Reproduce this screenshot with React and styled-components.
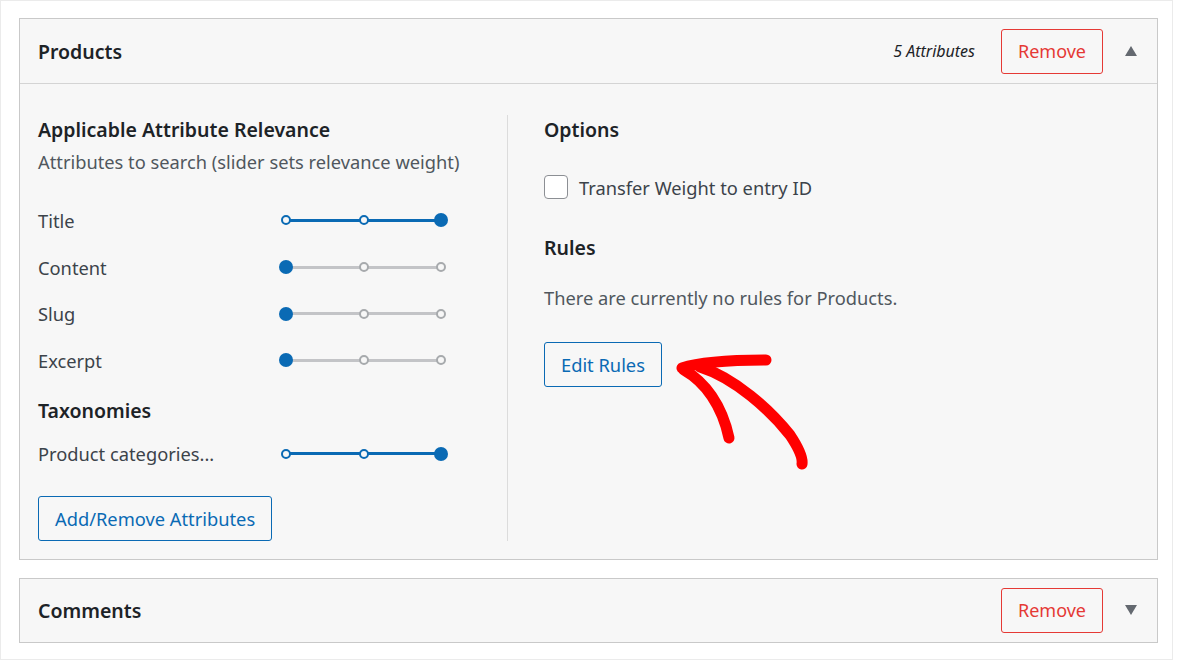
import React from "react";
import styled, { createGlobalStyle } from "styled-components";

const blue = "#0a6ab4";
const red = "#e53935";
const textDark = "#1d2327";
const textGray = "#50575e";

const GlobalStyle = createGlobalStyle`
  html, body { margin: 0; padding: 0; background: #fff; }
  body { font-family: "Noto Sans", "Open Sans", sans-serif; color: ${textDark}; }
  * { box-sizing: border-box; }
`;

const Page = styled.div`
  width: 1173px;
  height: 660px;
  border: 1px solid #ebebeb;
  padding: 17px 14px 0 18px;
  display: flex;
  flex-direction: column;
  gap: 18px;
`;

const Card = styled.section`
  border: 1px solid #c9c9c9;
  background: #f7f7f7;
`;

const Header = styled.header`
  height: ${(p) => (p.$open ? "65px" : "63px")};
  display: flex;
  align-items: center;
  padding: 0 20px 0 18px;
  border-bottom: ${(p) => (p.$open ? "1px solid #d4d4d4" : "none")};
`;

const CardTitle = styled.h2`
  margin: 0;
  flex: 1;
  font-size: 19.5px;
  font-weight: 600;
  color: ${textDark};
`;

const Count = styled.span`
  font-style: italic;
  font-size: 16px;
  color: ${textDark};
  margin-right: 26px;
`;

const RemoveButton = styled.button`
  width: 102px;
  height: 45px;
  border: 1px solid ${red};
  border-radius: 3px;
  background: transparent;
  color: ${red};
  font-family: inherit;
  font-size: 18px;
  cursor: pointer;
`;

const Toggle = styled.span`
  width: 0;
  height: 0;
  margin-left: 22px;
  border-left: 6.5px solid transparent;
  border-right: 6.5px solid transparent;
  ${(p) =>
    p.$up
      ? "border-bottom: 10px solid #646970;"
      : "border-top: 10px solid #646970;"}
`;

const Body = styled.div`
  position: relative;
  display: flex;
  padding: 31px 18px 18px 18px;
`;

const LeftCol = styled.div`
  width: 470px;
  padding-right: 20px;
  border-right: 1px solid #dcdcdc;
  display: flex;
  flex-direction: column;
`;

const RightCol = styled.div`
  flex: 1;
  padding-left: 36px;
  display: flex;
  flex-direction: column;
`;

const SectionTitle = styled.h3`
  margin: ${(p) => p.$mt || 0}px 0 0;
  font-size: 19.5px;
  line-height: 30px;
  font-weight: 600;
  color: ${textDark};
`;

const Note = styled.p`
  margin: ${(p) => p.$mt || 0}px 0 0;
  font-size: 18.3px;
  line-height: 30px;
  color: ${textGray};
`;

const AttrRow = styled.div`
  height: ${(p) => p.$h || 46.7}px;
  margin-top: ${(p) => p.$mt || 0}px;
  display: flex;
  align-items: center;
`;

const AttrLabel = styled.span`
  width: 241px;
  font-size: 18.3px;
  color: #3c434a;
`;

const Track = styled.div`
  position: relative;
  width: 169px;
  height: 14px;
  display: flex;
  align-items: center;
  justify-content: space-between;
  &::before {
    content: "";
    position: absolute;
    left: 7px;
    right: 7px;
    top: 5.5px;
    height: 3px;
    background: ${(p) => (p.$full ? blue : "#c3c4c7")};
  }
`;

const Stop = styled.span`
  position: relative;
  width: 14px;
  height: 14px;
  display: flex;
  align-items: center;
  justify-content: center;
  &::after {
    content: "";
    width: ${(p) => (p.$active ? 14 : 10)}px;
    height: ${(p) => (p.$active ? 14 : 10)}px;
    border-radius: 50%;
    box-sizing: border-box;
    background: ${(p) => (p.$active ? blue : "#f7f7f7")};
    border: ${(p) => (p.$active ? "none" : `2px solid ${p.$ring}`)};
  }
`;

const OutlineButton = styled.button`
  align-self: flex-start;
  margin-top: ${(p) => p.$mt || 0}px;
  height: 45px;
  padding: 0 16px;
  border: 1px solid ${blue};
  border-radius: 3px;
  background: transparent;
  color: ${blue};
  font-family: inherit;
  font-size: 18.3px;
  cursor: pointer;
`;

const CheckRow = styled.label`
  margin-top: 30px;
  height: 24px;
  display: flex;
  align-items: center;
  gap: 11px;
  font-size: 18.3px;
  color: #3c434a;
`;

const CheckBox = styled.span`
  width: 24px;
  height: 24px;
  border: 1.5px solid #8c8f94;
  border-radius: 4px;
  background: #fff;
`;

const Arrow = styled.svg`
  position: absolute;
  left: 640px;
  top: 256px;
  width: 160px;
  height: 140px;
  pointer-events: none;
`;

function Slider({ value }) {
  const full = value === 2;
  return (
    <Track $full={full}>
      {[0, 1, 2].map((i) => (
        <Stop key={i} $active={i === value} $ring={full ? blue : "#a7aaad"} />
      ))}
    </Track>
  );
}

const attributes = [
  { label: "Title", value: 2 },
  { label: "Content", value: 0 },
  { label: "Slug", value: 0 },
  { label: "Excerpt", value: 0 },
];

export default function App() {
  return (
    <>
      <GlobalStyle />
      <Page>
        <Card>
          <Header $open>
            <CardTitle>Products</CardTitle>
            <Count>5 Attributes</Count>
            <RemoveButton>Remove</RemoveButton>
            <Toggle $up />
          </Header>
          <Body>
            <LeftCol>
              <SectionTitle>Applicable Attribute Relevance</SectionTitle>
              <Note $mt={2}>Attributes to search (slider sets relevance weight)</Note>
              {attributes.map((a, i) => (
                <AttrRow key={a.label} $mt={i === 0 ? 20 : 0}>
                  <AttrLabel>{a.label}</AttrLabel>
                  <Slider value={a.value} />
                </AttrRow>
              ))}
              <SectionTitle $mt={12}>Taxonomies</SectionTitle>
              <AttrRow $h={46} $mt={5}>
                <AttrLabel>Product categories...</AttrLabel>
                <Slider value={2} />
              </AttrRow>
              <OutlineButton $mt={19}>Add/Remove Attributes</OutlineButton>
            </LeftCol>
            <RightCol>
              <SectionTitle>Options</SectionTitle>
              <CheckRow>
                <CheckBox />
                Transfer Weight to entry ID
              </CheckRow>
              <SectionTitle $mt={34}>Rules</SectionTitle>
              <Note $mt={20}>There are currently no rules for Products.</Note>
              <OutlineButton $mt={29}>Edit Rules</OutlineButton>
            </RightCol>
            <Arrow viewBox="660 340 160 140">
              <g fill="none" stroke="#f00" strokeWidth="11" strokeLinecap="round" strokeLinejoin="round">
                <path d="M682 368 C700 362 730 360 766 360" />
                <path d="M684 370 C705 382 722 405 729 438" />
                <path d="M700 367 C735 378 770 410 790 435 C800 450 803 458 802 464" />
              </g>
            </Arrow>
          </Body>
        </Card>
        <Card>
          <Header>
            <CardTitle>Comments</CardTitle>
            <RemoveButton>Remove</RemoveButton>
            <Toggle />
          </Header>
        </Card>
      </Page>
    </>
  );
}
